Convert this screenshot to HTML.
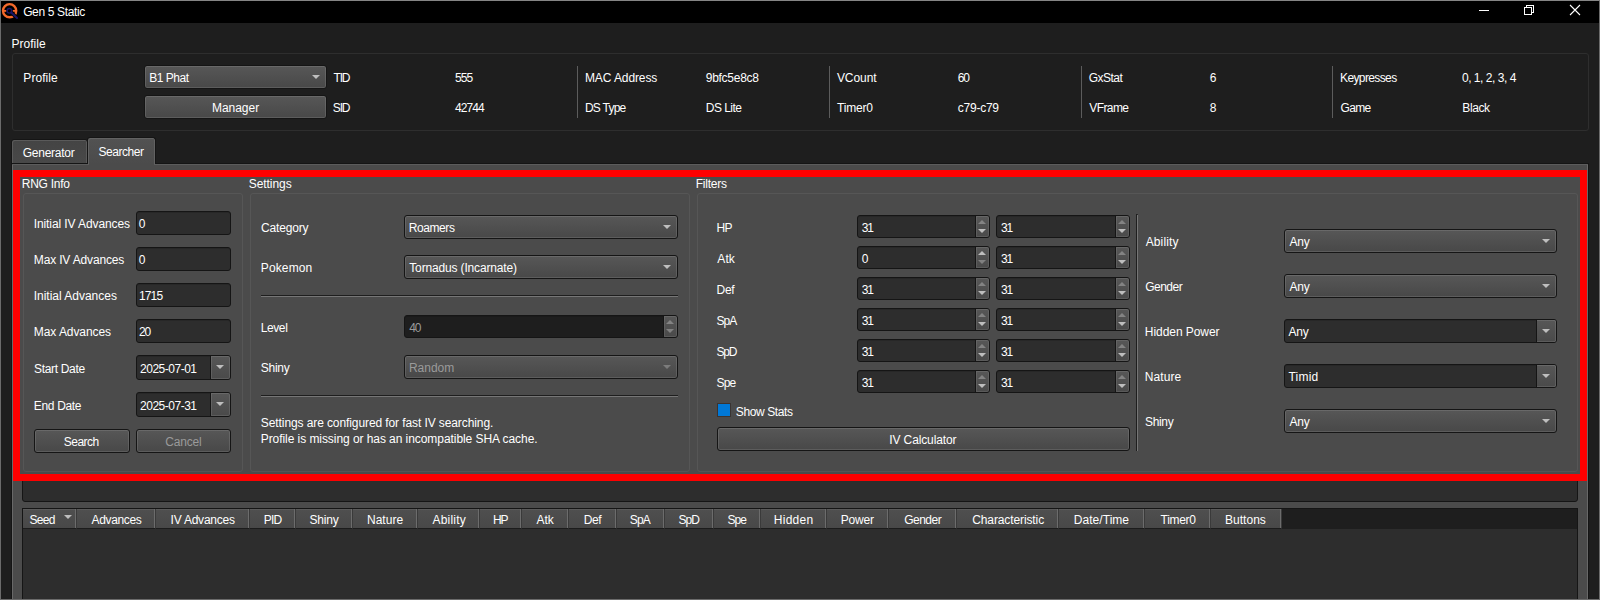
<!DOCTYPE html>
<html><head><meta charset="utf-8"><title>Gen 5 Static</title>
<style>
*{box-sizing:border-box;margin:0;padding:0}
html,body{width:1600px;height:600px;overflow:hidden;background:#1e1e1e}
body{position:relative;font-family:"Liberation Sans",sans-serif;font-size:12px;color:#fff}
.a{position:absolute}
.t{position:absolute;white-space:pre;height:16px;line-height:16px}
.dis{color:#9a9a9a}
.btn{position:absolute;border:1px solid #151515;border-radius:3px;background:linear-gradient(#575757,#484848);box-shadow:inset 0 0 0 1px rgba(255,255,255,0.11)}
.edit{position:absolute;border:1px solid #151515;border-radius:3px;background:#2d2d2d;box-shadow:inset 0 1px 0 rgba(0,0,0,0.12)}
.gb{position:absolute;border:1px solid #565656;border-radius:3px}
.arrow{position:absolute;width:0;height:0;border-left:4px solid transparent;border-right:4px solid transparent;border-top:4px solid #bebebe}
.up{position:absolute;width:0;height:0;border-left:4px solid transparent;border-right:4px solid transparent;border-bottom:4px solid #bebebe}
.dn{position:absolute;width:0;height:0;border-left:4px solid transparent;border-right:4px solid transparent;border-top:4px solid #bebebe}
.dim{opacity:.45}
.sbtn{position:absolute;background:linear-gradient(#575757,#4a4a4a);border-left:1px solid #151515}
.hdr{position:absolute;top:509px;height:20px;background:linear-gradient(#4f4f4f,#484848);border-right:1px solid #3a3a3a;border-bottom:1px solid #1c1c1c;box-shadow:inset -1px 0 0 #6c6c6c,inset 0 1px 0 #5a5a5a}
</style></head>
<body>
<div class="a" style="left:1px;top:1px;width:1598px;height:22px;background:#000"></div>
<svg class="a" style="left:1px;top:2px" width="20" height="19" viewBox="0 0 20 19">
<circle cx="8.6" cy="8.7" r="6.6" fill="none" stroke="#f4682a" stroke-width="2.4"/>
<rect x="2.6" y="8" width="3.2" height="1.8" fill="#f4682a"/><rect x="11.6" y="8" width="3.4" height="1.8" fill="#f4682a"/>
<circle cx="8.4" cy="8.8" r="3.1" fill="#000"/>
<path d="M10.2 10.4L16.2 16.2" stroke="#000" stroke-width="3.6"/>
<circle cx="8.4" cy="8.8" r="2.3" fill="none" stroke="#1b1566" stroke-width="1.4"/>
<path d="M10.2 10.5L16.0 16.0" stroke="#1b1566" stroke-width="2.1" stroke-linecap="round"/>
</svg>
<div class="t " style="left:23.15px;top:4px;letter-spacing:-0.351px">Gen 5 Static</div>
<div class="a" style="left:1479px;top:10px;width:10px;height:1px;background:#fff"></div>
<svg class="a" style="left:1523px;top:4px" width="12" height="12" viewBox="0 0 12 12" shape-rendering="crispEdges">
<rect x="1.5" y="3.5" width="7" height="7" fill="none" stroke="#fff" stroke-width="1"/>
<path d="M3.5 3.5V1.5H10.5V8.5H8.5" fill="none" stroke="#fff" stroke-width="1"/></svg>
<svg class="a" style="left:1569px;top:4px" width="12" height="12" viewBox="0 0 12 12">
<path d="M1 1L11 11M11 1L1 11" stroke="#fff" stroke-width="1.1"/></svg>
<div class="t " style="left:11.44px;top:36px;letter-spacing:0.036px">Profile</div>
<div class="gb" style="left:12px;top:53px;width:1577px;height:78px;border-color:#2e2e2e;background:none"></div>
<div class="t " style="left:23.34px;top:70px;letter-spacing:0.053px">Profile</div>
<div class="btn" style="left:144px;top:65px;width:183px;height:24px"></div>
<div class="arrow" style="left:312px;top:75px;"></div>
<div class="t " style="left:149.34px;top:70px;letter-spacing:-0.503px">B1 Phat</div>
<div class="btn" style="left:144px;top:95px;width:183px;height:24px"></div>
<div class="t " style="left:211.94px;top:100px;letter-spacing:-0.028px">Manager</div>
<div class="t " style="left:333.57px;top:70px;letter-spacing:-1.200px">TID</div>
<div class="t " style="left:454.89px;top:70px;letter-spacing:-0.868px">555</div>
<div class="t " style="left:332.86px;top:100px;letter-spacing:-1.200px">SID</div>
<div class="t " style="left:454.97px;top:100px;letter-spacing:-0.900px">42744</div>
<div class="t " style="left:584.94px;top:70px;letter-spacing:-0.094px">MAC Address</div>
<div class="t " style="left:705.75px;top:70px;letter-spacing:-0.270px">9bfc5e8c8</div>
<div class="t " style="left:584.94px;top:100px;letter-spacing:-0.747px">DS Type</div>
<div class="t " style="left:705.74px;top:100px;letter-spacing:-0.519px">DS Lite</div>
<div class="t " style="left:836.91px;top:70px;letter-spacing:-0.069px">VCount</div>
<div class="t " style="left:957.75px;top:70px;letter-spacing:-1.190px">60</div>
<div class="t " style="left:836.97px;top:100px;letter-spacing:-0.170px">Timer0</div>
<div class="t " style="left:957.81px;top:100px;letter-spacing:-0.240px">c79-c79</div>
<div class="t " style="left:1088.75px;top:70px;letter-spacing:-0.526px">GxStat</div>
<div class="t " style="left:1209.75px;top:70px;letter-spacing:-0.100px">6</div>
<div class="t " style="left:1089.21px;top:100px;letter-spacing:-0.567px">VFrame</div>
<div class="t " style="left:1209.78px;top:100px;letter-spacing:-0.100px">8</div>
<div class="t " style="left:1340.04px;top:70px;letter-spacing:-0.621px">Keypresses</div>
<div class="t " style="left:1461.94px;top:70px;letter-spacing:-0.471px">0, 1, 2, 3, 4</div>
<div class="t " style="left:1340.45px;top:100px;letter-spacing:-0.626px">Game</div>
<div class="t " style="left:1462.34px;top:100px;letter-spacing:-0.402px">Black</div>
<div class="a" style="left:577px;top:66px;width:1px;height:52px;background:#5c5c5c"></div>
<div class="a" style="left:829px;top:66px;width:1px;height:52px;background:#5c5c5c"></div>
<div class="a" style="left:1081px;top:66px;width:1px;height:52px;background:#5c5c5c"></div>
<div class="a" style="left:1332px;top:66px;width:1px;height:52px;background:#5c5c5c"></div>
<div class="a" style="left:11px;top:163px;width:1578px;height:440px;background:#4b4b4b;border:1px solid #151515;box-shadow:inset 0 1px 0 #5c5c5c,inset 1px 0 0 #686868,inset -1px 0 0 #686868"></div>
<div class="a" style="left:11px;top:139px;width:77px;height:25px;background:linear-gradient(#444,#484848);border:1px solid #151515;border-radius:3px 3px 0 0;box-shadow:inset 1px 1px 0 #5a5a5a,inset -1px 0 0 #5a5a5a"></div>
<div class="t " style="left:22.75px;top:145px;letter-spacing:-0.262px">Generator</div>
<div class="a" style="left:87px;top:137px;width:69px;height:27px;background:linear-gradient(#525252,#4b4b4b);border:1px solid #151515;border-bottom:none;border-radius:3px 3px 0 0;box-shadow:inset 1px 1px 0 #626262,inset -1px 0 0 #626262"></div>
<div class="a" style="left:88px;top:164px;width:67px;height:1px;background:#4b4b4b;border-left:1px solid #5e5e5e;border-right:1px solid #5e5e5e"></div>
<div class="t " style="left:98.56px;top:144px;letter-spacing:-0.462px">Searcher</div>
<div class="t " style="left:21.74px;top:176px;letter-spacing:-0.259px">RNG Info</div>
<div class="t " style="left:248.76px;top:176px;letter-spacing:-0.067px">Settings</div>
<div class="t " style="left:695.74px;top:176px;letter-spacing:-0.248px">Filters</div>
<div class="gb" style="left:23px;top:193px;width:220px;height:279px"></div>
<div class="gb" style="left:250px;top:193px;width:440px;height:279px"></div>
<div class="gb" style="left:697px;top:193px;width:881px;height:279px"></div>
<div class="t " style="left:33.71px;top:216px;letter-spacing:-0.092px">Initial IV Advances</div>
<div class="edit" style="left:136px;top:211px;width:95px;height:24px"></div>
<div class="t " style="left:138.84px;top:216px;letter-spacing:-0.100px">0</div>
<div class="t " style="left:33.84px;top:252px;letter-spacing:-0.164px">Max IV Advances</div>
<div class="edit" style="left:136px;top:247px;width:95px;height:24px"></div>
<div class="t " style="left:138.84px;top:252px;letter-spacing:-0.100px">0</div>
<div class="t " style="left:33.71px;top:288px;letter-spacing:-0.014px">Initial Advances</div>
<div class="edit" style="left:136px;top:283px;width:95px;height:24px"></div>
<div class="t " style="left:139.03px;top:288px;letter-spacing:-0.886px">1715</div>
<div class="t " style="left:33.84px;top:324px;letter-spacing:-0.071px">Max Advances</div>
<div class="edit" style="left:136px;top:319px;width:95px;height:24px"></div>
<div class="t " style="left:138.98px;top:324px;letter-spacing:-1.122px">20</div>
<div class="t " style="left:33.96px;top:361px;letter-spacing:-0.312px">Start Date</div>
<div class="edit" style="left:136px;top:355px;width:95px;height:25px"></div>
<div class="sbtn" style="left:210px;top:356px;width:20px;height:23px;border-radius:0 2px 2px 0;box-shadow:inset 0 0 0 1px rgba(255,255,255,0.10)"></div>
<div class="arrow" style="left:216px;top:365px"></div>
<div class="t " style="left:140.08px;top:361px;letter-spacing:-0.495px">2025-07-01</div>
<div class="t " style="left:33.84px;top:398px;letter-spacing:-0.341px">End Date</div>
<div class="edit" style="left:136px;top:392px;width:95px;height:25px"></div>
<div class="sbtn" style="left:210px;top:393px;width:20px;height:23px;border-radius:0 2px 2px 0;box-shadow:inset 0 0 0 1px rgba(255,255,255,0.10)"></div>
<div class="arrow" style="left:216px;top:402px"></div>
<div class="t " style="left:140.08px;top:398px;letter-spacing:-0.495px">2025-07-31</div>
<div class="btn" style="left:34px;top:429px;width:96px;height:24px"></div>
<div class="t " style="left:63.86px;top:434px;letter-spacing:-0.544px">Search</div>
<div class="btn" style="left:136px;top:429px;width:95px;height:24px"></div>
<div class="t dis" style="left:165.25px;top:434px;letter-spacing:-0.178px">Cancel</div>
<div class="t " style="left:261.05px;top:220px;letter-spacing:-0.170px">Category</div>
<div class="btn" style="left:404px;top:215px;width:274px;height:24px"></div>
<div class="arrow" style="left:663px;top:225px;"></div>
<div class="t " style="left:408.74px;top:220px;letter-spacing:-0.415px">Roamers</div>
<div class="t " style="left:260.74px;top:260px;letter-spacing:0.142px">Pokemon</div>
<div class="btn" style="left:404px;top:255px;width:274px;height:24px"></div>
<div class="arrow" style="left:663px;top:265px;"></div>
<div class="t " style="left:409.27px;top:260px;letter-spacing:-0.155px">Tornadus (Incarnate)</div>
<div class="a" style="left:261px;top:295px;width:417px;height:1px;background:#1e1e1e"></div>
<div class="a" style="left:261px;top:296px;width:417px;height:1px;background:#767676"></div>
<div class="t " style="left:260.74px;top:320px;letter-spacing:-0.403px">Level</div>
<div class="edit" style="left:404px;top:315px;width:274px;height:23px;background:#1e1e1e;"></div>
<div class="sbtn" style="left:663px;top:316px;width:14px;height:21px;border-radius:0 2px 2px 0;box-shadow:inset 0 0 0 1px rgba(255,255,255,0.09)"></div>
<div class="up dim" style="left:666.0px;top:320px"></div>
<div class="dn dim" style="left:666.0px;top:329px"></div>
<div class="t dis" style="left:409.27px;top:320px;letter-spacing:-1.200px">40</div>
<div class="t " style="left:260.86px;top:360px;letter-spacing:-0.302px">Shiny</div>
<div class="btn" style="left:404px;top:355px;width:274px;height:24px"></div>
<div class="arrow" style="left:663px;top:365px;opacity:.4;"></div>
<div class="t dis" style="left:408.94px;top:360px;letter-spacing:-0.009px">Random</div>
<div class="a" style="left:261px;top:395px;width:417px;height:1px;background:#1e1e1e"></div>
<div class="a" style="left:261px;top:396px;width:417px;height:1px;background:#767676"></div>
<div class="t " style="left:260.86px;top:415px;letter-spacing:-0.097px">Settings are configured for fast IV searching.</div>
<div class="t " style="left:260.74px;top:431px;letter-spacing:-0.064px">Profile is missing or has an incompatible SHA cache.</div>
<div class="t " style="left:716.44px;top:220px;letter-spacing:-0.502px">HP</div>
<div class="edit" style="left:857px;top:215px;width:133px;height:23px;"></div>
<div class="sbtn" style="left:975px;top:216px;width:14px;height:21px;border-radius:0 2px 2px 0;box-shadow:inset 0 0 0 1px rgba(255,255,255,0.09)"></div>
<div class="up dim" style="left:978.0px;top:220px"></div>
<div class="dn" style="left:978.0px;top:229px"></div>
<div class="t " style="left:861.72px;top:220px;letter-spacing:-1.200px">31</div>
<div class="edit" style="left:996px;top:215px;width:134px;height:23px;"></div>
<div class="sbtn" style="left:1115px;top:216px;width:14px;height:21px;border-radius:0 2px 2px 0;box-shadow:inset 0 0 0 1px rgba(255,255,255,0.09)"></div>
<div class="up dim" style="left:1118.0px;top:220px"></div>
<div class="dn" style="left:1118.0px;top:229px"></div>
<div class="t " style="left:1000.92px;top:220px;letter-spacing:-1.200px">31</div>
<div class="t " style="left:717.25px;top:251px;letter-spacing:0.140px">Atk</div>
<div class="edit" style="left:857px;top:246px;width:133px;height:23px;"></div>
<div class="sbtn" style="left:975px;top:247px;width:14px;height:21px;border-radius:0 2px 2px 0;box-shadow:inset 0 0 0 1px rgba(255,255,255,0.09)"></div>
<div class="up" style="left:978.0px;top:251px"></div>
<div class="dn dim" style="left:978.0px;top:260px"></div>
<div class="t " style="left:861.84px;top:251px;letter-spacing:-0.100px">0</div>
<div class="edit" style="left:996px;top:246px;width:134px;height:23px;"></div>
<div class="sbtn" style="left:1115px;top:247px;width:14px;height:21px;border-radius:0 2px 2px 0;box-shadow:inset 0 0 0 1px rgba(255,255,255,0.09)"></div>
<div class="up dim" style="left:1118.0px;top:251px"></div>
<div class="dn" style="left:1118.0px;top:260px"></div>
<div class="t " style="left:1000.92px;top:251px;letter-spacing:-1.200px">31</div>
<div class="t " style="left:716.44px;top:282px;letter-spacing:-0.221px">Def</div>
<div class="edit" style="left:857px;top:277px;width:133px;height:23px;"></div>
<div class="sbtn" style="left:975px;top:278px;width:14px;height:21px;border-radius:0 2px 2px 0;box-shadow:inset 0 0 0 1px rgba(255,255,255,0.09)"></div>
<div class="up dim" style="left:978.0px;top:282px"></div>
<div class="dn" style="left:978.0px;top:291px"></div>
<div class="t " style="left:861.72px;top:282px;letter-spacing:-1.200px">31</div>
<div class="edit" style="left:996px;top:277px;width:134px;height:23px;"></div>
<div class="sbtn" style="left:1115px;top:278px;width:14px;height:21px;border-radius:0 2px 2px 0;box-shadow:inset 0 0 0 1px rgba(255,255,255,0.09)"></div>
<div class="up dim" style="left:1118.0px;top:282px"></div>
<div class="dn" style="left:1118.0px;top:291px"></div>
<div class="t " style="left:1000.92px;top:282px;letter-spacing:-1.200px">31</div>
<div class="t " style="left:716.56px;top:313px;letter-spacing:-1.002px">SpA</div>
<div class="edit" style="left:857px;top:308px;width:133px;height:23px;"></div>
<div class="sbtn" style="left:975px;top:309px;width:14px;height:21px;border-radius:0 2px 2px 0;box-shadow:inset 0 0 0 1px rgba(255,255,255,0.09)"></div>
<div class="up dim" style="left:978.0px;top:313px"></div>
<div class="dn" style="left:978.0px;top:322px"></div>
<div class="t " style="left:861.72px;top:313px;letter-spacing:-1.200px">31</div>
<div class="edit" style="left:996px;top:308px;width:134px;height:23px;"></div>
<div class="sbtn" style="left:1115px;top:309px;width:14px;height:21px;border-radius:0 2px 2px 0;box-shadow:inset 0 0 0 1px rgba(255,255,255,0.09)"></div>
<div class="up dim" style="left:1118.0px;top:313px"></div>
<div class="dn" style="left:1118.0px;top:322px"></div>
<div class="t " style="left:1000.92px;top:313px;letter-spacing:-1.200px">31</div>
<div class="t " style="left:716.56px;top:344px;letter-spacing:-1.200px">SpD</div>
<div class="edit" style="left:857px;top:339px;width:133px;height:23px;"></div>
<div class="sbtn" style="left:975px;top:340px;width:14px;height:21px;border-radius:0 2px 2px 0;box-shadow:inset 0 0 0 1px rgba(255,255,255,0.09)"></div>
<div class="up dim" style="left:978.0px;top:344px"></div>
<div class="dn" style="left:978.0px;top:353px"></div>
<div class="t " style="left:861.72px;top:344px;letter-spacing:-1.200px">31</div>
<div class="edit" style="left:996px;top:339px;width:134px;height:23px;"></div>
<div class="sbtn" style="left:1115px;top:340px;width:14px;height:21px;border-radius:0 2px 2px 0;box-shadow:inset 0 0 0 1px rgba(255,255,255,0.09)"></div>
<div class="up dim" style="left:1118.0px;top:344px"></div>
<div class="dn" style="left:1118.0px;top:353px"></div>
<div class="t " style="left:1000.92px;top:344px;letter-spacing:-1.200px">31</div>
<div class="t " style="left:716.56px;top:375px;letter-spacing:-0.820px">Spe</div>
<div class="edit" style="left:857px;top:370px;width:133px;height:23px;"></div>
<div class="sbtn" style="left:975px;top:371px;width:14px;height:21px;border-radius:0 2px 2px 0;box-shadow:inset 0 0 0 1px rgba(255,255,255,0.09)"></div>
<div class="up dim" style="left:978.0px;top:375px"></div>
<div class="dn" style="left:978.0px;top:384px"></div>
<div class="t " style="left:861.72px;top:375px;letter-spacing:-1.200px">31</div>
<div class="edit" style="left:996px;top:370px;width:134px;height:23px;"></div>
<div class="sbtn" style="left:1115px;top:371px;width:14px;height:21px;border-radius:0 2px 2px 0;box-shadow:inset 0 0 0 1px rgba(255,255,255,0.09)"></div>
<div class="up dim" style="left:1118.0px;top:375px"></div>
<div class="dn" style="left:1118.0px;top:384px"></div>
<div class="t " style="left:1000.92px;top:375px;letter-spacing:-1.200px">31</div>
<div class="a" style="left:717px;top:403px;width:14px;height:14px;background:#0078d7;border:1px solid #3a3432"></div>
<div class="t " style="left:735.86px;top:404px;letter-spacing:-0.402px">Show Stats</div>
<div class="btn" style="left:717px;top:427px;width:413px;height:24px"></div>
<div class="t " style="left:889.31px;top:432px;letter-spacing:-0.124px">IV Calculator</div>
<div class="a" style="left:1136px;top:214px;width:1px;height:237px;background:#1e1e1e"></div>
<div class="a" style="left:1137px;top:215px;width:1px;height:236px;background:#767676"></div>
<div class="a" style="left:1137px;top:214px;width:1px;height:1px;background:#2a2a2a"></div>
<div class="t " style="left:1145.65px;top:234px;letter-spacing:0.134px">Ability</div>
<div class="btn" style="left:1284px;top:229px;width:273px;height:24px"></div>
<div class="arrow" style="left:1542px;top:239px;"></div>
<div class="t " style="left:1289.55px;top:234px;letter-spacing:-0.245px">Any</div>
<div class="t " style="left:1145.15px;top:279px;letter-spacing:-0.499px">Gender</div>
<div class="btn" style="left:1284px;top:274px;width:273px;height:24px"></div>
<div class="arrow" style="left:1542px;top:284px;"></div>
<div class="t " style="left:1289.55px;top:279px;letter-spacing:-0.245px">Any</div>
<div class="t " style="left:1144.84px;top:324px;letter-spacing:-0.057px">Hidden Power</div>
<div class="edit" style="left:1284px;top:319px;width:273px;height:24px"></div>
<div class="sbtn" style="left:1536px;top:320px;width:20px;height:22px;border-radius:0 2px 2px 0;box-shadow:inset -1px 0 0 rgba(255,255,255,0.10),inset 0 1px 0 rgba(255,255,255,0.10),inset 0 -1px 0 rgba(255,255,255,0.10)"></div>
<div class="arrow" style="left:1542px;top:329px"></div>
<div class="t " style="left:1288.55px;top:324px;letter-spacing:-0.245px">Any</div>
<div class="t " style="left:1144.84px;top:369px;letter-spacing:0.063px">Nature</div>
<div class="edit" style="left:1284px;top:364px;width:273px;height:24px"></div>
<div class="sbtn" style="left:1536px;top:365px;width:20px;height:22px;border-radius:0 2px 2px 0;box-shadow:inset -1px 0 0 rgba(255,255,255,0.10),inset 0 1px 0 rgba(255,255,255,0.10),inset 0 -1px 0 rgba(255,255,255,0.10)"></div>
<div class="arrow" style="left:1542px;top:374px"></div>
<div class="t " style="left:1288.47px;top:369px;letter-spacing:0.218px">Timid</div>
<div class="t " style="left:1144.96px;top:414px;letter-spacing:-0.327px">Shiny</div>
<div class="btn" style="left:1284px;top:409px;width:273px;height:24px"></div>
<div class="arrow" style="left:1542px;top:419px;"></div>
<div class="t " style="left:1289.55px;top:414px;letter-spacing:-0.245px">Any</div>
<div class="a" style="left:22px;top:478px;width:1556px;height:24px;background:#2d2d2d;border:1px solid #151515;border-radius:3px"></div>
<div class="a" style="left:22px;top:508px;width:1556px;height:100px;background:#2d2d2d;border:1px solid #151515"></div>
<div class="a" style="left:23px;top:509px;width:1554px;height:20px;background:#1e1e1e"></div>
<div class="hdr" style="left:23px;width:54px"></div>
<div class="arrow" style="left:64px;top:515px"></div>
<div class="t " style="left:29.56px;top:512px;letter-spacing:-0.707px">Seed</div>
<div class="hdr" style="left:77px;width:79px"></div>
<div class="t " style="left:91.55px;top:512px;letter-spacing:-0.343px">Advances</div>
<div class="hdr" style="left:156px;width:94px"></div>
<div class="t " style="left:170.61px;top:512px;letter-spacing:-0.236px">IV Advances</div>
<div class="hdr" style="left:250px;width:46px"></div>
<div class="t " style="left:263.84px;top:512px;letter-spacing:-0.876px">PID</div>
<div class="hdr" style="left:296px;width:57px"></div>
<div class="t " style="left:309.56px;top:512px;letter-spacing:-0.227px">Shiny</div>
<div class="hdr" style="left:353px;width:65px"></div>
<div class="t " style="left:366.94px;top:512px;letter-spacing:0.043px">Nature</div>
<div class="hdr" style="left:418px;width:62px"></div>
<div class="t " style="left:432.55px;top:512px;letter-spacing:0.184px">Ability</div>
<div class="hdr" style="left:480px;width:42px"></div>
<div class="t " style="left:492.94px;top:512px;letter-spacing:-1.002px">HP</div>
<div class="hdr" style="left:522px;width:47px"></div>
<div class="t " style="left:536.55px;top:512px;letter-spacing:-0.010px">Atk</div>
<div class="hdr" style="left:569px;width:48px"></div>
<div class="t " style="left:583.84px;top:512px;letter-spacing:-0.471px">Def</div>
<div class="hdr" style="left:617px;width:48px"></div>
<div class="t " style="left:629.86px;top:512px;letter-spacing:-0.902px">SpA</div>
<div class="hdr" style="left:665px;width:49px"></div>
<div class="t " style="left:678.56px;top:512px;letter-spacing:-0.954px">SpD</div>
<div class="hdr" style="left:714px;width:47px"></div>
<div class="t " style="left:727.56px;top:512px;letter-spacing:-0.970px">Spe</div>
<div class="hdr" style="left:761px;width:66px"></div>
<div class="t " style="left:773.84px;top:512px;letter-spacing:0.261px">Hidden</div>
<div class="hdr" style="left:827px;width:62px"></div>
<div class="t " style="left:840.74px;top:512px;letter-spacing:-0.196px">Power</div>
<div class="hdr" style="left:889px;width:68px"></div>
<div class="t " style="left:904.15px;top:512px;letter-spacing:-0.499px">Gender</div>
<div class="hdr" style="left:957px;width:102px"></div>
<div class="t " style="left:972.25px;top:512px;letter-spacing:-0.112px">Characteristic</div>
<div class="hdr" style="left:1059px;width:86px"></div>
<div class="t " style="left:1073.84px;top:512px;letter-spacing:0.039px">Date/Time</div>
<div class="hdr" style="left:1145px;width:66px"></div>
<div class="t " style="left:1160.57px;top:512px;letter-spacing:-0.290px">Timer0</div>
<div class="hdr" style="left:1211px;width:71px"></div>
<div class="t " style="left:1225.04px;top:512px;letter-spacing:0.018px">Buttons</div>
<div class="a" style="left:13px;top:170px;width:1574px;height:311px;border:7px solid #ff0000"></div>
<div class="a" style="left:0;top:0;width:1600px;height:600px;border:1px solid #6b6b6b;border-top-color:#858585;pointer-events:none"></div>
</body></html>
